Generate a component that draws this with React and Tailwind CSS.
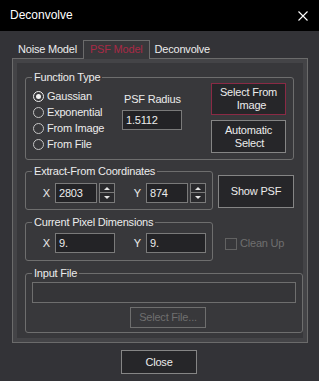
import React from 'react';

const RADIOS = [
  { label: 'Gaussian', checked: true },
  { label: 'Exponential' },
  { label: 'From Image' },
  { label: 'From File' },
];

function Radio({ label, checked }) {
  return (
    <div className="h-[16px] flex items-center">
      <span
        className={`w-[11px] h-[11px] rounded-full border flex items-center justify-center ${
          checked ? 'border-[#f0f0f0]' : 'border-[#c4c4c4]'
        }`}
      >
        {checked && <span className="w-[5px] h-[5px] rounded-full bg-[#f0f0f0]" />}
      </span>
      <span className="ml-[3px]">{label}</span>
    </div>
  );
}

function Field({ value, w }) {
  return (
    <div
      className={`${w} h-[20px] border border-[#7a7a7a] bg-[#232326] pl-[3px] flex items-center`}
    >
      {value}
    </div>
  );
}

function Spinner() {
  return (
    <div className="ml-[2px] w-[16px] h-[20px] flex flex-col">
      <div className="h-[10px] border border-[#7a7a7a] bg-[#2a2a2d] flex items-center justify-center">
        <svg width="6" height="3" viewBox="0 0 6 3">
          <path d="M3 0L6 3H0z" fill="#e6e6e6" />
        </svg>
      </div>
      <div className="h-[10px] border border-t-0 border-[#7a7a7a] bg-[#2a2a2d] flex items-center justify-center">
        <svg width="6" height="3" viewBox="0 0 6 3">
          <path d="M0 0H6L3 3z" fill="#e6e6e6" />
        </svg>
      </div>
    </div>
  );
}

function Group({ title, className, children }) {
  return (
    <fieldset className={`border border-[#6e6e6e] rounded-[3px] ${className}`}>
      <legend className="ml-[6px] px-[2px] leading-[12px]">{title}</legend>
      {children}
    </fieldset>
  );
}

export default function App() {
  return (
    <div className="w-[319px] h-[381px] bg-[#333337] text-[#ececec] text-[11px] leading-[13px] tracking-[-0.2px] font-['Liberation_Sans',Arial,sans-serif] flex flex-col overflow-hidden">
      {/* Title bar */}
      <div className="h-[31px] shrink-0 bg-black flex items-center justify-between pl-[10px] pr-[11px]">
        <span className="text-[12px] tracking-normal text-white">Deconvolve</span>
        <svg width="10" height="10" viewBox="0 0 10 10">
          <path d="M0.5 0.5L9.5 9.5M9.5 0.5L0.5 9.5" stroke="#ffffff" strokeWidth="1.1" />
        </svg>
      </div>

      {/* Tabs */}
      <div className="flex mt-[9px] ml-[12px] h-[18px] relative z-10">
        <div className="px-[6px] flex items-center">Noise Model</div>
        <div className="px-[6px] h-[19px] pb-[1px] flex items-center border border-b-0 border-[#6b6b6b] bg-[#38383b] text-[#a82a46]">
          PSF Model
        </div>
        <div className="px-[5px] flex items-center">Deconvolve</div>
      </div>

      {/* Tab page */}
      <div className="ml-[12px] w-[296px] h-[285px] shrink-0 border border-[#6b6b6b] bg-[#444447] p-[4px]">
        <div className="h-full bg-[#38383b] pt-[8px] pl-[8px] flex flex-col">
          <Group title="Function Type" className="w-[269px] pb-[6px]">
            <div className="flex">
              <div className="ml-[7px] w-[89px] mt-[5px] flex flex-col">
                {RADIOS.map(r => (
                  <Radio key={r.label} {...r} />
                ))}
              </div>
              <div className="w-[89px] flex flex-col pt-[9px]">
                <div className="pl-[2px] h-[14px] leading-[14px]">PSF Radius</div>
                <div className="mt-[4px]">
                  <Field value="1.5112" w="w-[60px]" />
                </div>
              </div>
              <div className="w-[75px] flex flex-col gap-[5px]">
                <div className="h-[32px] border border-[#8a2a45] bg-[#262629] leading-[13px] flex flex-col items-center justify-center">
                  <span>Select From</span>
                  <span className="pl-[6px]">Image</span>
                </div>
                <div className="h-[33px] border border-[#858585] bg-[#262629] leading-[13px] flex flex-col items-center justify-center">
                  <span>Automatic</span>
                  <span className="pl-[2px]">Select</span>
                </div>
              </div>
            </div>
          </Group>

          <div className="flex items-start mt-[5px]">
            <Group title="Extract-From Coordinates" className="w-[188px] pb-[6px]">
              <div className="flex items-center mt-[6px]">
                <span className="w-[24px] text-right">X</span>
                <div className="ml-[5px]">
                  <Field value="2803" w="w-[42px]" />
                </div>
                <Spinner />
                <span className="w-[26px] text-right">Y</span>
                <div className="ml-[5px]">
                  <Field value="874" w="w-[42px]" />
                </div>
                <Spinner />
              </div>
            </Group>
            <button className="ml-[5px] mt-[10px] w-[76px] h-[33px] border border-[#858585] bg-[#262629]">
              Show PSF
            </button>
          </div>

          <div className="flex items-start mt-[6px]">
            <Group title="Current Pixel Dimensions" className="w-[188px] pb-[7px]">
              <div className="flex items-center mt-[5px]">
                <span className="w-[24px] text-right">X</span>
                <div className="ml-[5px]">
                  <Field value="9." w="w-[60px]" />
                </div>
                <span className="w-[26px] text-right">Y</span>
                <div className="ml-[5px]">
                  <Field value="9." w="w-[60px]" />
                </div>
              </div>
            </Group>
            <div className="ml-[12px] mt-[21px] flex items-center text-[#6f6f6f]">
              <span className="w-[12px] h-[12px] border border-[#626262]" />
              <span className="ml-[3px]">Clean Up</span>
            </div>
          </div>

          <Group title="Input File" className="w-[278px] mt-[6px] pb-[4px]">
            <div className="ml-[6px] mt-[3px] w-[264px] h-[21px] border border-[#6e6e6e] bg-[#353538]" />
            <button className="ml-[104px] mt-[4px] w-[76px] h-[21px] border border-[#6e6e6e] bg-[#38383b] text-[#6f6f6f]">
              Select File...
            </button>
          </Group>
        </div>
      </div>

      {/* Footer */}
      <button className="ml-[121px] mt-[7px] w-[76px] h-[24px] border border-[#858585] bg-[#262629]">
        Close
      </button>
    </div>
  );
}
